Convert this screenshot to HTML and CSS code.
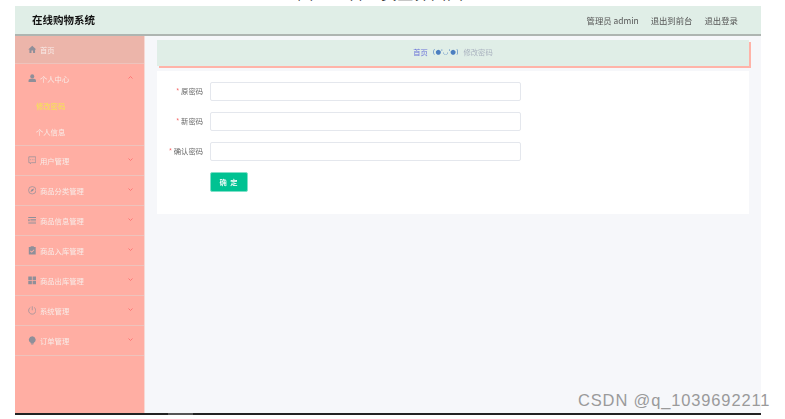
FILE: index.html
```html
<!DOCTYPE html>
<html lang="zh">
<head>
<meta charset="utf-8">
<title>在线购物系统</title>
<link rel="stylesheet" href="styles.css">
</head>
<body>
<div class="caption"><span>图 5-2 管理员主界面图</span></div>
<div class="app">
  <header class="topbar">
    <div class="brand">在线购物系统</div>
    <nav class="topnav"><span>管理员 admin</span><span>退出到前台</span><span>退出登录</span></nav>
  </header>
  <div class="body">
    <aside class="side">
      <div class="item home"><svg class="ico" viewBox="0 0 16 16"><path d="M8 1.500 0.500 8.500h2.200V15h3.800v-4.500h3V15h3.800V8.500h2.200z"/></svg><span>首页</span></div>
      <div class="item open"><svg class="ico" viewBox="0 0 16 16"><circle cx="8" cy="4.500" r="3.800"/><path d="M1 15v-2.500c0-2 2-3.500 4-3.500h6c2 0 4 1.500 4 3.500V15z"/></svg><span>个人中心</span><svg class="chev" viewBox="0 0 10 6"><path d="M1 5l4-4 4 4"/></svg></div>
      <div class="sub active">修改密码</div>
      <div class="sub last">个人信息</div>
      <div class="item"><svg class="ico" viewBox="0 0 16 16"><path class="ln" d="M1.500 1.500h13v11h-8l-2 2v-2h-3z"/><path class="ln" d="M4 7h1.500M7.300 7h1.500M10.500 7H12"/></svg><span>用户管理</span><svg class="chev" viewBox="0 0 10 6"><path d="M1 1l4 4 4-4"/></svg></div>
      <div class="item"><svg class="ico" viewBox="0 0 16 16"><circle class="ln" cx="8" cy="8" r="7"/><path d="M11.500 4.500 9.300 9.300 4.500 11.500l2.200-4.800z"/></svg><span>商品分类管理</span><svg class="chev" viewBox="0 0 10 6"><path d="M1 1l4 4 4-4"/></svg></div>
      <div class="item"><svg class="ico" viewBox="0 0 16 16"><path d="M0.500 2h15v1.700H.5zM0.500 12.300h15V14H.5zM4.500 6h11v1.300h-11zM4.500 8.700h11V10h-11zM.5 6h2.500v4H.5z"/></svg><span>商品信息管理</span><svg class="chev" viewBox="0 0 10 6"><path d="M1 1l4 4 4-4"/></svg></div>
      <div class="item"><svg class="ico" viewBox="0 0 16 16"><path d="M1.500 2H5V.5h6V2h3.500v14h-13zM5 8.500 3.800 9.700 7 12.800l5.200-5.200L11 6.400l-4 4z"/></svg><span>商品入库管理</span><svg class="chev" viewBox="0 0 10 6"><path d="M1 1l4 4 4-4"/></svg></div>
      <div class="item"><svg class="ico" viewBox="0 0 16 16"><path d="M.5 1h6.800v6.500H.5zM8.700 1h6.800v6.500H8.700zM.5 9h6.800v6.500H.5zM8.700 9h6.800v6.500H8.700z"/></svg><span>商品出库管理</span><svg class="chev" viewBox="0 0 10 6"><path d="M1 1l4 4 4-4"/></svg></div>
      <div class="item"><svg class="ico" viewBox="0 0 16 16"><path class="ln" d="M8 .5v7.500M4.500 2.700a6.800 6.800 0 1 0 7 0"/></svg><span>系统管理</span><svg class="chev" viewBox="0 0 10 6"><path d="M1 1l4 4 4-4"/></svg></div>
      <div class="item"><svg class="ico" viewBox="0 0 16 16"><path d="M8 .5a6.500 6.500 0 0 1 3 12.200V14H5v-1.300A6.500 6.500 0 0 1 8 .5zM6 14.500h4V16H6z"/></svg><span>订单管理</span><svg class="chev" viewBox="0 0 10 6"><path d="M1 1l4 4 4-4"/></svg></div>
    </aside>
    <main class="main">
      <div class="crumb"><a>首页</a><b>(●'◡'●)</b><span>修改密码</span></div>
      <form class="card">
        <div class="row"><label><i>*</i> 原密码</label><div class="field"></div></div>
        <div class="row"><label><i>*</i> 新密码</label><div class="field"></div></div>
        <div class="row"><label><i>*</i> 确认密码</label><div class="field"></div></div>
        <div class="btnrow"><div class="btn">确 定</div></div>
      </form>
    </main>
  </div>
</div>
<div class="bottomline"><div class="thumb"></div></div>
<div class="mark">CSDN @q_1039692211</div>
</body>
</html>
```
FILE: styles.css
```css
* { box-sizing: border-box; }
html, body { margin: 0; height: 419px; overflow: hidden; background: #fff; }
body { position: relative; font-family: "Noto Sans CJK SC", "Liberation Sans", sans-serif; }
.caption { height: 6px; width: 761px; overflow: hidden; text-align: center; color: #222; }
.caption span { display: block; margin-top: -15px; font-size: 16px; line-height: 14px; letter-spacing: 0.6px; }
.app { margin-left: 15px; width: 746px; height: 407px; display: flex; flex-direction: column; background: #f6f7fa; filter: blur(0.35px); }
.topbar { height: 30px; flex: none; background: #e0eee7; border-bottom: 2px solid #aeb5b1; display: flex; align-items: center; justify-content: space-between; padding: 0 23px 0 17px; }
.brand { font-size: 10.500px; font-weight: 700; color: #111; line-height: 14px; }
.topnav { display: flex; gap: 12px; font-size: 8.400px; color: #555; }
.body { flex: 1; display: flex; min-height: 0; }
.side { width: 130px; flex: none; background: #ffaea3; border-right: 1px solid #f7d9d4; }
.item { height: 30px; display: flex; align-items: center; padding: 0 11px 0 12.500px; font-size: 7.300px; color: #f8ece8; border-bottom: 1px solid #eec3bc; }
.item span { flex: 1; margin-left: 4px; }
.home { background: #ecb5aa; height: 28px; }
.open { border-bottom: 0; height: 29px; }
.ico { width: 8.500px; height: 8.500px; fill: #8f8f99; flex: none; }
.ln { fill: none; stroke: #8f8f99; stroke-width: 1.300; }
.chev { width: 5px; height: 3px; fill: none; stroke: #ff7070; stroke-width: 1.800; margin-top: -3px; }
.sub { height: 25px; padding-left: 21px; display: flex; align-items: center; font-size: 7.300px; color: #f8ece8; }
.sub.active { color: #f4e84e; }
.sub.last { border-bottom: 1px solid #eec3bc; height: 28px; }
.main { flex: 1; padding: 4px 12px 0 12px; min-width: 0; }
.crumb { height: 26px; background: #e0eee7; box-shadow: 2px 2px 0 #ffb3a8; display: flex; align-items: center; justify-content: center; gap: 5px; padding-bottom: 2px; font-size: 7.300px; color: #a9b2bf; }
.crumb a { color: #6a72d8; }
.crumb b { font-weight: 400; color: #4c7fc0; font-family: "DejaVu Sans", sans-serif; font-size: 6.500px; }
.card { margin-top: 5px; background: #fff; height: 143px; padding-top: 11px; }
.row { display: flex; align-items: center; height: 19px; margin-bottom: 11px; }
.row label { width: 47px; text-align: right; margin-right: 6px; padding: 0 1px 1px 0; font-size: 7.300px; color: #666; }
.row i { font-style: normal; color: #f56c6c; }
.field { width: 311px; height: 19px; background: #fff; border: 1px solid #e4e7ed; border-radius: 2px; }
.btnrow { padding-left: 53px; }
.btn { width: 38px; height: 20px; background: #00c292; border: 1px solid #7fe0c8; border-radius: 2px; color: #fff; font-size: 7.300px; font-weight: 500; letter-spacing: 1px; display: flex; align-items: center; justify-content: center; }
.bottomline { position: absolute; left: 15px; top: 413px; width: 746px; height: 2px; background: #222; }
.thumb { width: 25px; height: 2px; margin-left: 153px; background: #555; }
.mark { position: absolute; left: 578px; top: 390px; font: 16.500px/20px "Liberation Sans", sans-serif; color: #9a9a9a; letter-spacing: 0.85px; }
```
